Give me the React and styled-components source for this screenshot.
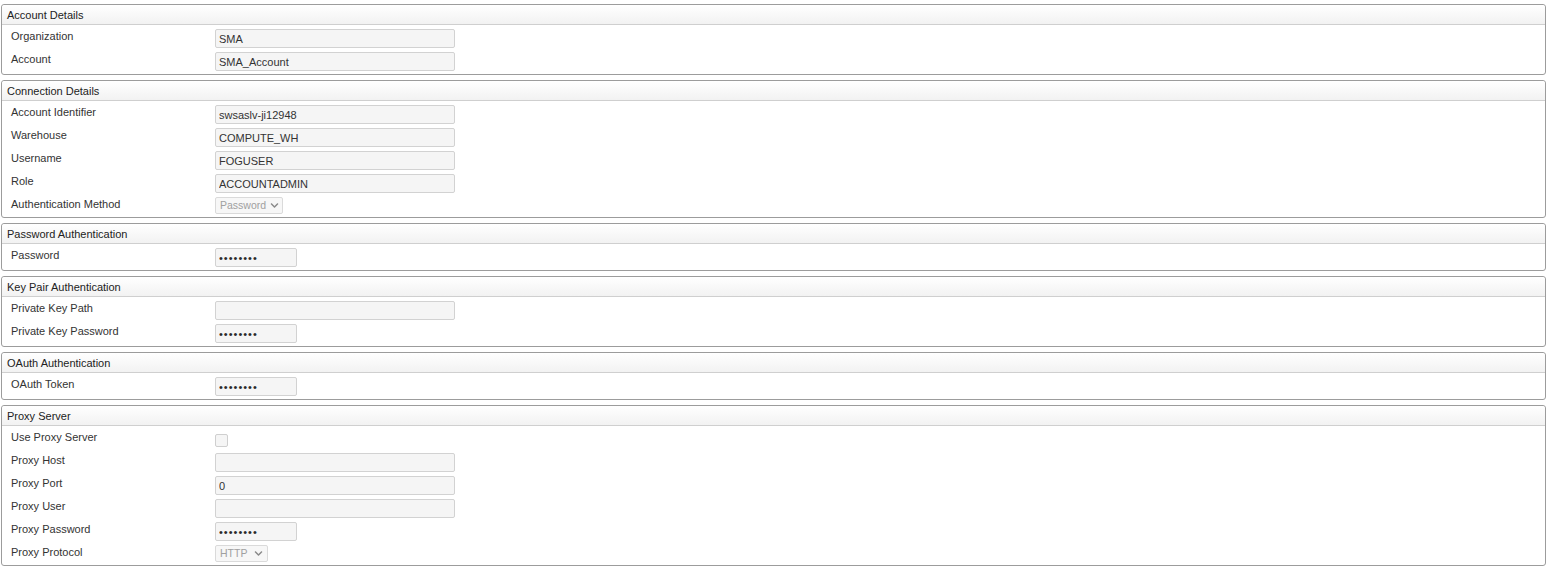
import React from "react";
import styled, { createGlobalStyle } from "styled-components";
import { FaChevronDown } from "react-icons/fa";

const GlobalStyle = createGlobalStyle`
  html, body {
    margin: 0;
    padding: 0;
    background: #ffffff;
  }
  body {
    font-family: "Liberation Sans", Arial, sans-serif;
    font-size: 11px;
    color: #333333;
  }
`;

const sections = [
  {
    title: "Account Details",
    fields: [
      { label: "Organization", type: "text", value: "SMA" },
      { label: "Account", type: "text", value: "SMA_Account" },
    ],
  },
  {
    title: "Connection Details",
    fields: [
      { label: "Account Identifier", type: "text", value: "swsaslv-ji12948" },
      { label: "Warehouse", type: "text", value: "COMPUTE_WH" },
      { label: "Username", type: "text", value: "FOGUSER" },
      { label: "Role", type: "text", value: "ACCOUNTADMIN" },
      { label: "Authentication Method", type: "select", value: "Password", width: 68 },
    ],
  },
  {
    title: "Password Authentication",
    fields: [{ label: "Password", type: "password" }],
  },
  {
    title: "Key Pair Authentication",
    fields: [
      { label: "Private Key Path", type: "text", value: "" },
      { label: "Private Key Password", type: "password" },
    ],
  },
  {
    title: "OAuth Authentication",
    fields: [{ label: "OAuth Token", type: "password" }],
  },
  {
    title: "Proxy Server",
    fields: [
      { label: "Use Proxy Server", type: "checkbox" },
      { label: "Proxy Host", type: "text", value: "" },
      { label: "Proxy Port", type: "text", value: "0" },
      { label: "Proxy User", type: "text", value: "" },
      { label: "Proxy Password", type: "password" },
      { label: "Proxy Protocol", type: "select", value: "HTTP", width: 53 },
    ],
  },
];

function Control({ field }) {
  if (field.type === "select") {
    return (
      <FakeSelect $width={field.width}>
        <span>{field.value}</span>
        <FaChevronDown />
      </FakeSelect>
    );
  }
  if (field.type === "checkbox") {
    return (
      <CheckCell>
        <Check />
      </CheckCell>
    );
  }
  if (field.type === "password") {
    return <TextInput $short type="password" value="12345678" readOnly />;
  }
  return <TextInput type="text" value={field.value} readOnly />;
}

function App() {
  return (
    <>
      <GlobalStyle />
      <Page>
        {sections.map((section) => (
          <Panel key={section.title}>
            <PanelHeader>{section.title}</PanelHeader>
            <PanelBody>
              {section.fields.map((field) => (
                <Row key={field.label}>
                  <Label>{field.label}</Label>
                  <Control field={field} />
                </Row>
              ))}
            </PanelBody>
          </Panel>
        ))}
      </Page>
    </>
  );
}

const Page = styled.div`
  display: flex;
  flex-direction: column;
  gap: 5px;
  padding: 4px 5px 2px 1px;
`;

const Panel = styled.section`
  border: 1px solid #9c9c9c;
  border-radius: 3px;
  background: #ffffff;
`;

const PanelHeader = styled.div`
  height: 19px;
  line-height: 20px;
  padding-left: 5px;
  border-bottom: 1px solid #cfcfcf;
  border-radius: 3px 3px 0 0;
  background: linear-gradient(to bottom, #ffffff 0%, #f2f2f2 100%);
  color: #222222;
  white-space: nowrap;
`;

const PanelBody = styled.div`
  padding: 0 0 3px 9px;
`;

const Row = styled.div`
  display: grid;
  grid-template-columns: 204px 1fr;
  align-items: start;
  padding-top: 4px;
`;

const Label = styled.div`
  line-height: 14px;
  color: #333333;
  white-space: nowrap;
`;

const TextInput = styled.input`
  box-sizing: border-box;
  width: ${(p) => (p.$short ? "82px" : "240px")};
  height: 19px;
  margin: 0;
  padding: 0 3px;
  border: 1px solid #d2d2d2;
  border-radius: 2px;
  background: #f5f5f5;
  font-family: "Liberation Sans", Arial, sans-serif;
  font-size: 11px;
  color: #333333;
  outline: none;
  &[type="password"] {
    font-size: 11px;
    letter-spacing: 1px;
    color: #2a2a2a;
  }
`;

const FakeSelect = styled.div`
  box-sizing: border-box;
  width: ${(p) => p.$width}px;
  height: 17px;
  display: flex;
  align-items: center;
  justify-content: space-between;
  gap: 4px;
  padding: 0 4px 0 4px;
  border: 1px solid #dadada;
  border-radius: 2px;
  background: #f7f7f7;
  color: #a0a0a0;
  font-size: 10.5px;
  span {
    line-height: 15px;
  }
  svg {
    flex: none;
    font-size: 9px;
    color: #8a8a8a;
  }
`;

const CheckCell = styled.div`
  height: 19px;
  display: flex;
  align-items: center;
`;

const Check = styled.div`
  box-sizing: border-box;
  width: 13px;
  height: 13px;
  margin-top: 2px;
  border: 1px solid #cfcfcf;
  border-radius: 2px;
  background: #f5f5f5;
`;

export default App;
